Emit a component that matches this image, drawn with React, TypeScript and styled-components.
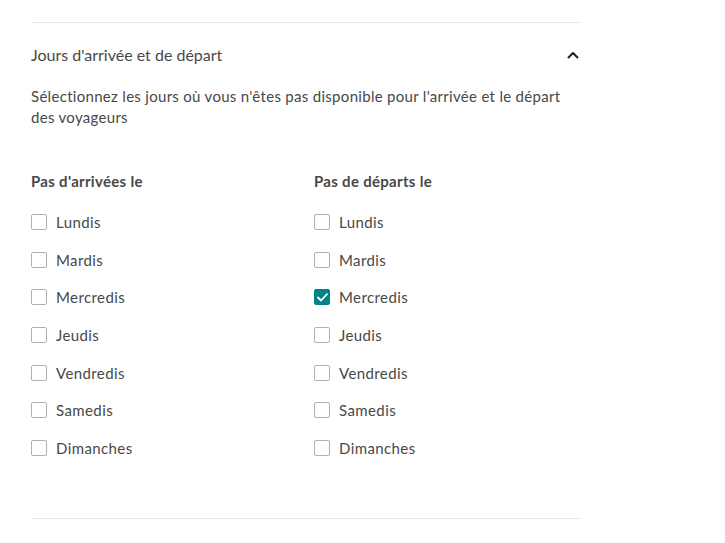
import React from "react";
import styled, { createGlobalStyle } from "styled-components";

const Global = createGlobalStyle`
  html, body { margin: 0; padding: 0; background: #fff; }
  body { font-family: Lato, "Open Sans", sans-serif; color: #484848; }
`;

const Page = styled.div`
  width: 550px;
  margin-left: 31px;
  padding-top: 22px;
`;

const Divider = styled.div`
  height: 1px;
  background: #e8e8e8;
`;

const Header = styled.div`
  display: flex;
  align-items: center;
  justify-content: space-between;
  height: 63px;
  font-size: 16px;
`;

const Chevron = styled.svg`
  width: 12px;
  height: 12px;
  margin-right: 2px;
`;

const Description = styled.p`
  margin: 0;
  font-size: 15px;
  line-height: 21px;
  letter-spacing: 0.3px;
  padding-right: 10px;
`;

const Columns = styled.div`
  display: grid;
  grid-template-columns: 283px 1fr;
  margin-top: 43px;
  padding-bottom: 51px;
`;

const Column = styled.div`
  display: flex;
  flex-direction: column;
`;

const ColumnTitle = styled.div`
  font-size: 15px;
  font-weight: 700;
  line-height: 20px;
  letter-spacing: 0.3px;
  margin-bottom: 12px;
`;

const Row = styled.label`
  display: flex;
  align-items: center;
  height: 37.7px;
  font-size: 15px;
  letter-spacing: 0.4px;
`;

const Box = styled.span<{ $checked?: boolean }>`
  width: 16px;
  height: 16px;
  box-sizing: border-box;
  border-radius: 2px;
  border: 1px solid ${(p) => (p.$checked ? "#008489" : "#b0b0b0")};
  background: ${(p) => (p.$checked ? "#008489" : "#fff")};
  display: flex;
  align-items: center;
  justify-content: center;
  margin-right: 9px;
`;

const days = ["Lundis", "Mardis", "Mercredis", "Jeudis", "Vendredis", "Samedis", "Dimanches"];

function DayList({ title, checked }: { title: string; checked: string[] }) {
  return (
    <Column>
      <ColumnTitle>{title}</ColumnTitle>
      {days.map((d) => {
        const c = checked.includes(d);
        return (
          <Row key={d}>
            <Box $checked={c}>
              {c && (
                <svg width="11" height="9" viewBox="0 0 11 9">
                  <path d="M1 4.5 L4 7.5 L10 1.2" fill="none" stroke="#fff" strokeWidth="1.8" strokeLinecap="round" strokeLinejoin="round" />
                </svg>
              )}
            </Box>
            {d}
          </Row>
        );
      })}
    </Column>
  );
}

export default function App() {
  return (
    <>
      <Global />
      <Page>
        <Divider />
        <Header>
          <span>Jours d'arrivée et de départ</span>
          <Chevron viewBox="0 0 12 12">
            <path d="M1.5 8.5 L6 4 L10.5 8.5" fill="none" stroke="#222" strokeWidth="2" strokeLinecap="round" strokeLinejoin="round" />
          </Chevron>
        </Header>
        <Description>
          Sélectionnez les jours où vous n'êtes pas disponible pour l'arrivée et le départ des voyageurs
        </Description>
        <Columns>
          <DayList title="Pas d'arrivées le" checked={[]} />
          <DayList title="Pas de départs le" checked={["Mercredis"]} />
        </Columns>
        <Divider />
      </Page>
    </>
  );
}
